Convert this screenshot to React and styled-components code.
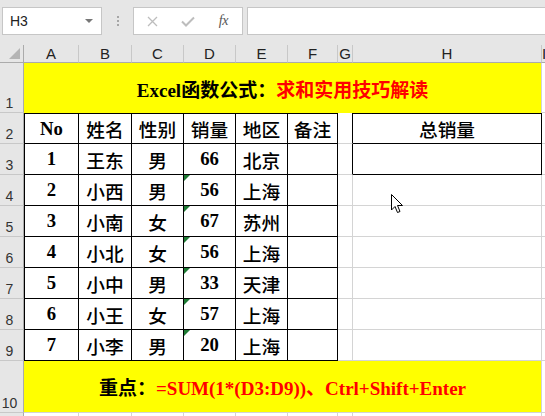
import React from 'react'
import styled, { createGlobalStyle } from 'styled-components'

const GlobalStyle = createGlobalStyle`
  html, body {
    margin: 0;
    padding: 0;
    background: #fff;
  }
  body {
    width: 545px;
    height: 416px;
    overflow: hidden;
    font-family: "Liberation Sans", Arial, sans-serif;
  }
`

const Window = styled.div`
  position: relative;
  width: 545px;
  height: 416px;
  overflow: hidden;
  background: #fff;
`

// formula bar strip
const Toolbar = styled.div`
  display: flex;
  align-items: flex-start;
  height: 45px;
  padding: 7px 0 0 2px;
  box-sizing: border-box;
  background: #e6e6e6;
`

const NameBox = styled.div`
  display: flex;
  align-items: center;
  justify-content: space-between;
  width: 100px;
  height: 28px;
  box-sizing: border-box;
  padding: 0 8px 0 7px;
  background: #fff;
  border: 1px solid #c6c6c6;
  font-size: 14px;
  color: #222;
`

const Caret = styled.span`
  width: 0;
  height: 0;
  border-left: 4px solid transparent;
  border-right: 4px solid transparent;
  border-top: 4px solid #777;
`

const Grip = styled.div`
  display: flex;
  flex-direction: column;
  align-items: center;
  justify-content: center;
  gap: 2px;
  width: 31px;
  height: 28px;
`

const Dot = styled.span`
  width: 2px;
  height: 2px;
  background: #a6a6a6;
`

const ButtonBox = styled.div`
  display: flex;
  width: 110px;
  height: 28px;
  box-sizing: border-box;
  padding: 0 1px;
  background: #fff;
  border: 1px solid #c6c6c6;
`

const IconSlot = styled.div`
  display: flex;
  align-items: center;
  justify-content: center;
  width: 36px;
  color: ${p => p.$muted ? '#bdbdbd' : '#555'};
`

const Fx = styled.span`
  font-family: "Liberation Serif", serif;
  font-style: italic;
  font-size: 14px;
  letter-spacing: -0.5px;
  color: #555;
`

const FormulaInput = styled.div`
  flex: 1;
  height: 28px;
  margin-left: 4px;
  box-sizing: border-box;
  background: #fff;
  border: 1px solid #c6c6c6;
  border-right: none;
`

// worksheet grid
const Sheet = styled.div`
  display: grid;
  grid-template-columns: 24px 55px 53px 52px 52px 52px 50px 15px 189px 1fr;
  grid-template-rows: 18px 50px repeat(8, 31px) 52px 40px;
`

const Corner = styled.div`
  position: relative;
  background: #e6e6e6;
  border-right: 1px solid #ababab;
  border-bottom: 1px solid #ababab;

  &::after {
    content: '';
    position: absolute;
    right: 3px;
    bottom: 3px;
    border-left: 11px solid transparent;
    border-bottom: 11px solid #b4b4b4;
  }
`

const ColHead = styled.div`
  display: flex;
  align-items: center;
  justify-content: center;
  box-sizing: border-box;
  background: #e6e6e6;
  border-right: 1px solid #c8c8c8;
  border-bottom: 1px solid #ababab;
  font-size: 15px;
  color: #222;
`

const RowHead = styled.div`
  display: flex;
  align-items: flex-end;
  justify-content: center;
  box-sizing: border-box;
  padding: 0 4px 1px 0;
  background: #e6e6e6;
  border-right: 1px solid #ababab;
  border-bottom: 1px solid #c8c8c8;
  font-size: 14px;
  line-height: 16px;
  color: #333;
`

const ink = '1px solid #000'
const grid = '1px solid #d4d4d4'

const Cell = styled.div`
  position: relative;
  display: flex;
  align-items: center;
  justify-content: center;
  box-sizing: border-box;
  border-right: ${p => p.$r ? ink : grid};
  border-bottom: ${p => p.$b ? ink : grid};
  border-top: ${p => p.$t ? ink : 'none'};
  border-left: ${p => p.$l ? ink : 'none'};
  font-family: "Liberation Serif", "Noto Sans CJK SC", serif;
  font-size: 18.7px;
  font-weight: ${p => p.$cjk ? 500 : 700};
  color: #000;

  ${p => p.$flag && `
    &::before {
      content: '';
      position: absolute;
      top: 0;
      left: 0;
      border-top: 6px solid #1e7b34;
      border-right: 6px solid transparent;
    }
  `}
`

const Banner = styled.div`
  grid-column: span 8;
  display: flex;
  align-items: center;
  justify-content: center;
  background: #ffff00;
  border-right: ${grid};
  border-bottom: ${p => p.$closed ? grid : 'none'};
  box-sizing: border-box;
  font-family: "Liberation Serif", "Noto Sans CJK SC", serif;
  font-size: 19px;
  font-weight: 700;
  color: #000;
  white-space: pre;
`

const Red = styled.span`
  color: #ff0000;
`

const Pointer = styled.svg`
  position: absolute;
  left: 390px;
  top: 193px;
`

const cols = ['A', 'B', 'C', 'D', 'E', 'F', 'G', 'H', 'I']

const rows = [
  ['No', '姓名', '性别', '销量', '地区', '备注'],
  ['1', '王东', '男', '66', '北京', ''],
  ['2', '小西', '男', '56', '上海', ''],
  ['3', '小南', '女', '67', '苏州', ''],
  ['4', '小北', '女', '56', '上海', ''],
  ['5', '小中', '男', '33', '天津', ''],
  ['6', '小王', '女', '57', '上海', ''],
  ['7', '小李', '男', '20', '上海', ''],
]

const hasCjk = s => /[\u4e00-\u9fff]/.test(s)

function TableRow({ cells, index }) {
  const n = index + 2
  const first = index === 0
  return (
    <>
      <RowHead>{n}</RowHead>
      {cells.map((text, c) => (
        <Cell
          key={c}
          $r
          $b
          $t={first}
          $l={c === 0}
          $cjk={hasCjk(text)}
          $flag={c === 3 && index >= 2}
        >
          {text}
        </Cell>
      ))}
      <Cell $r={index < 2} />
      {index < 2 ? (
        <Cell $r $b $t={first} $cjk>{first ? '总销量' : ''}</Cell>
      ) : (
        <Cell />
      )}
      <Cell />
    </>
  )
}

export default function App() {
  return (
    <Window>
      <GlobalStyle />
      <Toolbar>
        <NameBox>
          H3
          <Caret />
        </NameBox>
        <Grip>
          <Dot />
          <Dot />
          <Dot />
        </Grip>
        <ButtonBox>
          <IconSlot $muted>
            <svg width="11" height="11" viewBox="0 0 11 11">
              <path d="M1 1 L10 10 M10 1 L1 10" stroke="currentColor" strokeWidth="1.3" fill="none" />
            </svg>
          </IconSlot>
          <IconSlot $muted>
            <svg width="14" height="11" viewBox="0 0 14 11">
              <path d="M1 5.5 L5 9.5 L13 1.5" stroke="currentColor" strokeWidth="2" fill="none" />
            </svg>
          </IconSlot>
          <IconSlot>
            <Fx>fx</Fx>
          </IconSlot>
        </ButtonBox>
        <FormulaInput />
      </Toolbar>

      <Sheet>
        <Corner />
        {cols.map(c => <ColHead key={c}>{c}</ColHead>)}

        <RowHead>1</RowHead>
        <Banner>
          Excel函数公式：<Red>求和实用技巧解读</Red>
        </Banner>
        <Cell />

        {rows.map((cells, i) => <TableRow key={i} cells={cells} index={i} />)}

        <RowHead>10</RowHead>
        <Banner $closed>
          重点：<Red>=SUM(1*(D3:D9))、Ctrl+Shift+Enter</Red>
        </Banner>
        <Cell />

        <RowHead />
        {cols.map(c => <Cell key={c} />)}
      </Sheet>

      <Pointer width="14" height="21" viewBox="0 0 14 21">
        <path
          d="M1.5 1.5 L1.5 17 L5 13.5 L7.5 19.5 L10 18.5 L7.5 12.5 L12.5 12.5 Z"
          fill="#fff"
          stroke="#000"
          strokeWidth="1"
          strokeLinejoin="round"
        />
      </Pointer>
    </Window>
  )
}
